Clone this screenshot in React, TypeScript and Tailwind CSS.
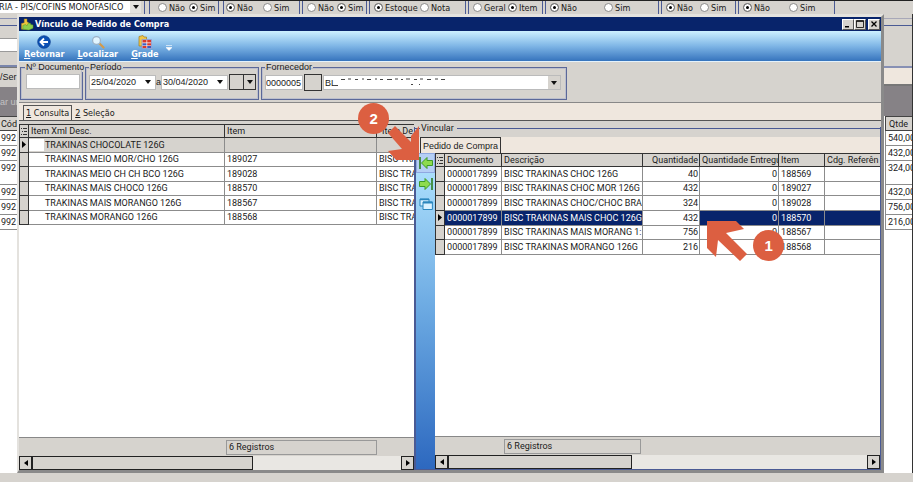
import { useState } from "react"
import clsx from "clsx"

const radioGroups = [
  { id: "g1", width: "w-[70px]", first: "w-[31px]", options: ["Não", "Sim"], value: "Sim", gap: "mr-[4px]", pad: "pl-[8px]" },
  { id: "g2", width: "w-[77px]", first: "w-[37px]", options: ["Não", "Sim"], value: "Não", gap: "mr-[2px]", pad: "pl-[2px]" },
  { id: "g3", width: "w-[65px]", first: "w-[30px]", options: ["Não", "Sim"], value: "Sim", gap: "mr-[2px]", pad: "pl-[4px]" },
  { id: "g4", width: "w-[97px]", first: "w-[46px]", options: ["Estoque", "Nota"], value: "Estoque", gap: "mr-[2px]", pad: "pl-[4px]" },
  { id: "g5", width: "w-[75px]", first: "w-[35px]", options: ["Geral", "Item"], value: "Item", gap: "mr-[2px]", pad: "pl-[4px]" },
  { id: "g6", width: "w-[114px]", first: "w-[54px]", options: ["Não", "Sim"], value: "Não", gap: "mr-[2px]", pad: "pl-[4px]" },
  { id: "g7", width: "w-[75px]", first: "w-[34px]", options: ["Não", "Sim"], value: "Não", gap: "mr-[2px]", pad: "pl-[4px]" },
  { id: "g8", width: "w-[97px]", first: "w-[46px]", options: ["Não", "Sim"], value: "Não", gap: "", pad: "pl-[4px]" },
]

const xmlItems = [
  { desc: "TRAKINAS CHOCOLATE 126G", item: "", itemDesc: "" },
  { desc: "TRAKINAS MEIO MOR/CHO 126G", item: "189027", itemDesc: "BISC TRA" },
  { desc: "TRAKINAS MEIO CH CH BCO 126G", item: "189028", itemDesc: "BISC TRA" },
  { desc: "TRAKINAS MAIS CHOCO 126G", item: "188570", itemDesc: "BISC TRA" },
  { desc: "TRAKINAS MAIS MORANGO 126G", item: "188567", itemDesc: "BISC TRA" },
  { desc: "TRAKINAS MORANGO 126G", item: "188568", itemDesc: "BISC TRA" },
]

const orderItems = [
  { doc: "0000017899", desc: "BISC TRAKINAS CHOC 126G", qty: 40, delivered: 0, item: "188569" },
  { doc: "0000017899", desc: "BISC TRAKINAS CHOC MOR 126G", qty: 432, delivered: 0, item: "189027" },
  { doc: "0000017899", desc: "BISC TRAKINAS CHOC/CHOC BRA", qty: 324, delivered: 0, item: "189028" },
  { doc: "0000017899", desc: "BISC TRAKINAS MAIS CHOC 126G", qty: 432, delivered: 0, item: "188570" },
  { doc: "0000017899", desc: "BISC TRAKINAS MAIS MORANG 1:", qty: 756, delivered: 0, item: "188567" },
  { doc: "0000017899", desc: "BISC TRAKINAS MORANGO 126G", qty: 216, delivered: 0, item: "188568" },
]

const quantities = ["540,00", "432,00", "324,00", "432,00", "756,00", "216,00"]

const gridFont = "font-['Roboto','Liberation_Sans',sans-serif]"
const th = "overflow-hidden whitespace-nowrap border-r border-b border-[#333] p-0 pl-[2px] text-left font-normal"
const cell = "overflow-hidden whitespace-nowrap border-r border-b border-[#8c8c8c]"
const td = cell + " p-0 pl-[2px]"
const marker = "border border-t-0 border-[#333] bg-[#d6d3ce] p-0"

function Caret() {
  return (
    <svg viewBox="0 0 6 4" className="h-[4px] w-[6px]">
      <path d="M0 0h6L3 4z" fill="#111" />
    </svg>
  )
}

function RowPointer() {
  return (
    <svg viewBox="0 0 4 7" className="mx-auto h-[7px] w-[4px]">
      <path d="M0 0l4 3.5L0 7z" fill="#000" />
    </svg>
  )
}

function ListGlyph() {
  return (
    <svg viewBox="0 0 6 7" className="mx-auto h-[7px] w-[6px]" stroke="#333" strokeWidth="1">
      <path d="M0 .5h1M2 .5h4M1 3.5h1M3 3.5h3M0 6.5h1M2 6.5h4" />
    </svg>
  )
}

function RadioGroup({ group }: { group: (typeof radioGroups)[number] }) {
  const [value, setValue] = useState(group.value)
  return (
    <div className={clsx("flex h-[13px] flex-none items-center border-x border-[#4a5a94]", group.width, group.gap, group.pad)}>
      {group.options.map((option, index) => (
        <label key={option} className={clsx("flex flex-none items-center gap-[2px] whitespace-nowrap", index === 0 && group.first)}>
          <input
            type="radio"
            name={group.id}
            checked={value === option}
            onChange={() => setValue(option)}
            className="size-[9px] flex-none appearance-none rounded-full border border-[#8a8a8a] bg-white checked:bg-black checked:shadow-[inset_0_0_0_2px_#fff]"
          />
          {option}
        </label>
      ))}
    </div>
  )
}

function ScrollBar({ thumb }: { thumb: string }) {
  return (
    <div className="flex h-[14px] bg-[#e9e7e3]">
      <button aria-label="Rolar para a esquerda" className="flex w-[13px] flex-none items-center justify-center border border-[#222] bg-[#d6d3ce]">
        <svg viewBox="0 0 4 6" className="h-[6px] w-[4px]"><path d="M4 0v6L0 3z" /></svg>
      </button>
      <div className="flex-1">
        <div className={clsx("h-full border border-[#222] bg-[#d6d3ce]", thumb)} />
      </div>
      <button aria-label="Rolar para a direita" className="flex w-[13px] flex-none items-center justify-center border border-[#222] bg-[#d6d3ce]">
        <svg viewBox="0 0 4 6" className="h-[6px] w-[4px]"><path d="M0 0v6l4-3z" /></svg>
      </button>
    </div>
  )
}

// Part of the entry form that stays visible on the left of the window
function LeftBackground() {
  return (
    <div className="flex w-[17px] flex-none flex-col overflow-hidden whitespace-nowrap bg-white">
      <div className="h-[5px] border-b border-[#8790b4] bg-[#d6d3ce]" />
      <div className="h-[7px] border-b border-[#4a5a94] bg-[#d6d3ce]" />
      <div className="h-[12px] bg-[#d6d3ce]" />
      <div className="h-[14px] border-y border-[#9a9a9a] bg-white" />
      <div className="h-[15px] border-b-2 border-[#7a86ac] bg-[#d6d3ce]" />
      <div className="h-[20px] border-t border-[#777] bg-[#d6d3ce] pt-[3px] font-['Liberation_Sans',sans-serif]">/Ser</div>
      <div className="flex h-[29px] items-center bg-[#868286] font-['Liberation_Sans',sans-serif] text-[#c4c2c4]">ar un</div>
      <div className={clsx("h-[15px] border-t border-b border-[#444] bg-[#d6d3ce] pl-[1px] leading-[14px]", gridFont)}>Cód</div>
      {quantities.map((quantity, index) => (
        <div
          key={index}
          className={clsx("border-b border-[#8c8c8c] pl-[1px] leading-[14px]", gridFont, index === 2 ? "h-[24px]" : "h-[15px]")}
        >
          992
        </div>
      ))}
    </div>
  )
}

function RightBackground() {
  return (
    <div className={clsx("flex w-[29px] flex-none flex-col overflow-hidden whitespace-nowrap border-r border-[#333] bg-white", gridFont)}>
      <div className="h-[5px] border-b border-[#a8a8b8] bg-[#d6d3ce]" />
      <div className="h-[7px] border-b border-[#4a5a94] bg-[#d6d3ce]" />
      <div className="h-[42px] border-b-2 border-[#8790b4] bg-[#d6d3ce]" />
      <div className="h-[18px] border-b-2 border-[#777] bg-[#efe7de]" />
      <div className="h-[30px] bg-[#868286]" />
      <div className="ml-[1px] h-[15px] border-t border-b border-l border-[#444] bg-[#d6d3ce] pl-[3px] leading-[14px]">Qtde</div>
      {quantities.map((quantity, index) => (
        <div
          key={index}
          className={clsx("ml-[1px] border-b border-l border-[#8c8c8c] pl-[2px] leading-[14px]", index === 2 ? "h-[24px]" : "h-[15px]")}
        >
          {quantity}
        </div>
      ))}
    </div>
  )
}

function TitleBar() {
  const control = "flex h-[11px] w-[12px] items-center justify-center border border-[#fff] border-r-[#555] border-b-[#555] bg-[#d6d3ce]"
  return (
    <header className="flex h-[14px] items-center bg-[#08246b] pr-[1px] pl-[1px] text-white">
      <svg viewBox="0 0 14 14" className="h-[13px] w-[14px]">
        <path d="M4 1h3v3l3 2v6H1V6l3-1z" fill="#f0c63e" stroke="#a4801c" strokeWidth=".5" />
        <path d="M2.500 8l3-1 1.500 1.500 1-2.500 2.500-.5L11 7l2.500.5v3.500L9 13l-6.500-1z" fill="#8ccf4d" stroke="#4f9325" strokeWidth=".5" />
      </svg>
      <h1 className="ml-[1px] flex-1 text-[9px] font-bold">Vínculo de Pedido de Compra</h1>
      <button aria-label="Minimizar" className={control}>
        <svg viewBox="0 0 8 8" className="size-[8px]"><path d="M1 6h4v1.500H1z" /></svg>
      </button>
      <button aria-label="Maximizar" className={control}>
        <svg viewBox="0 0 8 8" className="size-[8px]"><path d="M.5.5h7v7h-7zM.5 1.500h7" fill="none" stroke="#000" strokeWidth=".8" /></svg>
      </button>
      <button aria-label="Fechar" className={clsx(control, "ml-[2px]")}>
        <svg viewBox="0 0 8 8" className="size-[8px]"><path d="M1.500 1.500l5 5M6.500 1.500l-5 5" stroke="#000" strokeWidth="1.300" /></svg>
      </button>
    </header>
  )
}

function Toolbar() {
  const button = "flex flex-col items-center text-[9px] leading-[10px] font-bold text-white"
  return (
    <nav className="flex h-[31px] items-start gap-[13px] border-b border-[#e4f2fc] bg-linear-to-b from-[#cdf1ff] via-[#7fb6e6] to-[#3674bd] pt-[4px] pl-[5px]">
      <button className={button}>
        <svg viewBox="0 0 14 14" className="size-[14px]">
          <circle cx="7" cy="7" r="6.300" fill="#0b50b4" stroke="#083a8c" strokeWidth=".7" />
          <path d="M11 7H4M7 3.500L3.500 7 7 10.500" fill="none" stroke="#fff" strokeWidth="1.900" />
        </svg>
        <span><u>R</u>etornar</span>
      </button>
      <button className={button}>
        <svg viewBox="0 0 14 14" className="size-[14px]">
          <path d="M8.500 8.500l4 4" stroke="#d39a4a" strokeWidth="2.200" strokeLinecap="round" />
          <circle cx="5.500" cy="5.500" r="3.900" fill="#e2f5ff" stroke="#9ab0c6" strokeWidth="1.200" />
        </svg>
        <span><u>L</u>ocalizar</span>
      </button>
      <button className={button}>
        <svg viewBox="0 0 14 14" className="size-[14px]">
          <path d="M1 1.500L5 .5l1 1.500h2.500v9H1z" fill="#efc64a" stroke="#a47d1d" strokeWidth=".7" />
          <path d="M4 4.500h9.500v9H4z" fill="#fff" stroke="#8a93c8" strokeWidth=".8" />
          <path d="M4.500 5h4v2.500h-4zM9.200 5H13v2.500H9.200z" fill="#d6382c" />
          <path d="M4.500 8.200h4v2.200h-4zM9.200 11H13v2H9.200z" fill="#3e5cc0" />
          <path d="M9.200 8.200H13v2.200H9.200zM4.500 11h4v2h-4z" fill="#d6382c" />
        </svg>
        <span><u>G</u>rade</span>
      </button>
      <svg viewBox="0 0 6 6" className="mt-[10px] -ml-[6px] h-[6px] w-[6px]">
        <path d="M0 .5h6M0 2.500h6L3 5.500z" fill="#fff" stroke="#fff" strokeWidth=".6" />
      </svg>
    </nav>
  )
}

function DateField({ label, value }: { label: string; value: string }) {
  const [date, setDate] = useState(value)
  return (
    <div className="flex h-[15px] w-[67px] items-center border border-[#bbb] bg-white">
      <input
        aria-label={label}
        value={date}
        onChange={(e) => setDate(e.target.value)}
        className="w-[51px] bg-transparent pl-[1px] outline-none"
      />
      <button aria-label="Abrir calendário" className="ml-[4px]"><Caret /></button>
    </div>
  )
}

function Filters() {
  const fieldset = "h-[38px] min-w-0 border border-[#5b6899] shadow-[inset_0_0_0_1px_#bcbfcc]"
  const legend = "h-[10px] px-[1px] leading-[10px] whitespace-nowrap"
  return (
    <form className="flex h-[41px] gap-[2px] border-b border-[#888] bg-[#d6d3ce] pl-[1px] font-['Liberation_Sans',sans-serif]">
      <fieldset className={clsx(fieldset, "w-[63px] pl-[4px]")}>
        <legend className={legend}><label htmlFor="documento">Nº Documento</label></legend>
        <input id="documento" className="mt-[2px] ml-[1px] block h-[15px] w-[54px] border border-[#bbb] bg-white outline-none" />
      </fieldset>
      <fieldset className={clsx(fieldset, "w-[174px] pl-[3px]")}>
        <legend className={legend}>Período</legend>
        <div className="mt-[2px] flex items-center">
          <DateField label="Data inicial" value="25/04/2020" />
          <span className="w-[5px] flex-none text-center">a</span>
          <DateField label="Data final" value="30/04/2020" />
          <button aria-label="Período rápido" className="ml-[1px] flex h-[16px] w-[27px] border border-[#333]">
            <span className="h-full w-[14px] border-r border-[#333]" />
            <span className="flex h-full flex-1 items-center justify-center"><Caret /></span>
          </button>
        </div>
      </fieldset>
      <fieldset className={clsx(fieldset, "w-[306px] pr-[5px] pl-[3px]")}>
        <legend className={legend}><label htmlFor="fornecedor">Fornecedor</label></legend>
        <div className="mt-[2px] flex items-center">
          <input id="fornecedor" defaultValue="0000005" className="h-[15px] w-[38px] flex-none border border-[#bbb] bg-white outline-none" />
          <button aria-label="Pesquisar fornecedor" className="mx-[1px] h-[17px] w-[18px] flex-none border border-[#333]" />
          <div className="relative flex-1">
            <select aria-label="Nome do fornecedor" className="block h-[15px] w-full appearance-none border border-[#bbb] bg-white pl-[1px] outline-none">
              <option>BL</option>
            </select>
            {/* remains of the erased supplier name */}
            <svg viewBox="0 0 114 8" className="pointer-events-none absolute top-[3px] left-[12px] h-[8px] w-[114px]" stroke="#444" strokeWidth="1">
              <path d="M0 7.500h3M6 1.500h4M13 1h3M20 1.500h3M27 1h2M32 1.500h4M40 1h2M45 1.500h3M52 1.500h5M60 1h3M66 1.500h2M71 1h4M79 1.500h3M85 1h3M92 1.500h4M100 1h3M106 1.500h4M76 6.500h2M84 6.500h1" />
            </svg>
            <span className="pointer-events-none absolute top-[1px] right-[1px] flex h-[13px] w-[12px] items-center justify-center bg-[#d6d3ce]">
              <Caret />
            </span>
          </div>
        </div>
      </fieldset>
    </form>
  )
}

function XmlItemsGrid() {
  return (
    <section className={clsx("flex w-11/24 flex-none flex-col overflow-hidden bg-[#d6d3ce] pt-[3px]", gridFont)}>
      <div className="flex-1 overflow-hidden bg-white">
        <table className="h-[101px] w-[460px] table-fixed border-separate border-spacing-0 border-t border-[#333]">
          <colgroup>
            <col className="w-[10px]" />
            <col className="w-[196px]" />
            <col className="w-[152px]" />
            <col className="w-[102px]" />
          </colgroup>
          <thead className="bg-[#d6d3ce]">
            <tr>
              <th className={marker}><ListGlyph /></th>
              <th className={th}>Item Xml Desc.</th>
              <th className={th}>Item</th>
              <th className={th}><span className="pl-[3px]">Item De</span></th>
            </tr>
          </thead>
          <tbody>
            {xmlItems.map((row, index) => (
              <tr key={row.desc} className={clsx(index === 0 && "bg-[#d6d3ce]")}>
                <td className={marker}>{index === 0 && <RowPointer />}</td>
                <td className={clsx(cell, "p-0")}>
                  <div className="flex">
                    <span className="w-[15px] flex-none bg-white" />
                    <span className="pl-[1px]">{row.desc}</span>
                  </div>
                </td>
                <td className={td}>{row.item}</td>
                <td className={td}>{row.itemDesc}</td>
              </tr>
            ))}
          </tbody>
        </table>
      </div>
      <footer className="flex h-[19px] items-center border-t border-[#888] pl-[207px]">
        <span className="flex h-[15px] w-[151px] items-center border border-[#999] pl-[2px]">6 Registros</span>
      </footer>
      <ScrollBar thumb="w-[60%]" />
    </section>
  )
}

function OrderGrid() {
  const [selected, setSelected] = useState(3)
  return (
    <div className="flex min-w-0 flex-1 flex-col bg-[#d6d3ce]">
      <div className="flex-1 overflow-hidden bg-white">
        <table className="h-[102px] w-[448px] table-fixed border-separate border-spacing-0 border-t border-[#333]">
          <colgroup>
            <col className="w-[10px]" />
            <col className="w-[57px]" />
            <col className="w-[141px]" />
            <col className="w-[57px]" />
            <col className="w-[79px]" />
            <col className="w-[46px]" />
            <col className="w-[58px]" />
          </colgroup>
          <thead className="bg-[#d6d3ce]">
            <tr>
              <th className={marker}><ListGlyph /></th>
              <th className={th}>Documento</th>
              <th className={th}>Descrição</th>
              <th className={clsx(th, "pr-[1px] text-right")}>Quantidade</th>
              <th className={th}>Quantidade Entregu</th>
              <th className={th}>Item</th>
              <th className={th}>Cdg. Referên</th>
            </tr>
          </thead>
          <tbody>
            {orderItems.map((row, index) => (
              <tr key={row.item} onClick={() => setSelected(index)} className={clsx(selected === index && "bg-[#08246b] text-white")}>
                <td className={clsx(marker, "text-black")}>{selected === index && <RowPointer />}</td>
                <td className={td}>{row.doc}</td>
                <td className={td}>{row.desc}</td>
                <td className={clsx(td, "bg-white pr-[1px] text-right text-[#1a1a1a]")}>{row.qty}</td>
                <td className={clsx(td, "pr-[1px] text-right")}>{row.delivered}</td>
                <td className={td}>{row.item}</td>
                <td className={td} />
              </tr>
            ))}
          </tbody>
        </table>
      </div>
      <footer className="flex h-[19px] items-center border-t border-[#888] pl-[69px]">
        <span className="flex h-[15px] w-[137px] items-center border border-[#999] pl-[2px]">6 Registros</span>
      </footer>
      <ScrollBar thumb="w-[44%]" />
    </div>
  )
}

function SideTools() {
  return (
    <div className="flex w-[20px] flex-none flex-col items-center border-l border-[#4a5a94] bg-linear-to-b from-[#b4e6ff] via-[#6ba9e2] to-[#2d68bf]">
      <button aria-label="Vincular item" className="flex h-[20px] w-full items-center justify-center border border-[#8fa8e0] bg-[#b5cff5]">
        <svg viewBox="0 0 14 14" className="size-[14px]">
          <path d="M1 1v12" stroke="#2c7d1e" strokeWidth="1.600" />
          <path d="M2.500 7L8 1.500v3h5.500v5H8v3z" fill="#8edb4e" stroke="#3d9a28" strokeWidth="1" />
        </svg>
      </button>
      <button aria-label="Desvincular item" className="flex h-[21px] w-full items-center justify-center">
        <svg viewBox="0 0 14 14" className="size-[14px]">
          <path d="M13 1v12" stroke="#2c7d1e" strokeWidth="1.600" />
          <path d="M11.500 7L6 1.500v3H.5v5H6v3z" fill="#8edb4e" stroke="#3d9a28" strokeWidth="1" />
        </svg>
      </button>
      <button aria-label="Janelas" className="flex h-[20px] w-full items-center justify-center">
        <svg viewBox="0 0 14 14" className="size-[14px]" fill="#d9f1ff" stroke="#2b86bd">
          <path d="M1 2h9v7H1z" />
          <path d="M1 2.500h9" strokeWidth="1.500" />
          <path d="M4 5h9.400v7.500H4z" />
          <path d="M4 5.500h9.400" strokeWidth="2" />
        </svg>
      </button>
    </div>
  )
}

function Callouts() {
  const badge = "absolute z-10 flex size-[31px] items-center justify-center rounded-full bg-[#dc5f41] font-['Liberation_Sans',sans-serif] text-[15px] font-bold text-white"
  return (
    <>
      <svg viewBox="0 0 34 35" className="absolute top-[-1px] left-[-29px] z-10 h-[35px] w-[34px]">
        <path d="M9 0l16 16v-6l8-10v34H10l-8-9 14-2L2 7z" fill="#dc5f41" />
      </svg>
      <span className={clsx(badge, "top-[-24px] left-[-57px]")}>2</span>
      <svg viewBox="0 0 42 42" className="absolute top-[94px] left-[292px] z-10 size-[42px]">
        <path d="M0 0h29l8 8-18 4 21 21-7 7-22-21-2 17-9-9z" fill="#dc5f41" />
      </svg>
      <span className={clsx(badge, "top-[103px] left-[338px]")}>1</span>
    </>
  )
}

export default function App() {
  return (
    <div className="flex min-h-screen flex-col overflow-hidden bg-[#d6d3ce] font-['DejaVu_Sans_Condensed','DejaVu_Sans',sans-serif] text-[9px] leading-[12px] text-[#1a1a1a]">
      <div className="flex h-[14px] flex-none overflow-hidden border-t border-[#222]">
        <div className="relative mr-[3px] w-[141px] flex-none">
          <select aria-label="Tributação" className="h-[12px] w-full appearance-none bg-white indent-[-1px] outline-none">
            <option>RIA - PIS/COFINS MONOFASICO</option>
          </select>
          <span className="pointer-events-none absolute top-[0px] right-[0px] flex h-[12px] w-[11px] items-center justify-center bg-[#e4e2de]">
            <Caret />
          </span>
        </div>
        <div className="mr-[4px] h-[13px] w-[1px] flex-none bg-[#4a5a94]" />
        {radioGroups.map((group) => (
          <RadioGroup key={group.id} group={group} />
        ))}
      </div>

      <div className="flex flex-1">
        <LeftBackground />
        <main className="flex min-w-0 flex-1 flex-col border-t-[3px] border-r-[3px] border-b-[3px] border-l-2 border-t-[#e4e2de] border-r-[#8a8a8a] border-b-[#8a8a8a] border-l-[#e4e2de] bg-[#d6d3ce]">
          <TitleBar />
          <Toolbar />
          <Filters />
          <div className="flex h-[18px] flex-none items-end border-b border-[#555] bg-[#efe7de] pl-[4px]" role="tablist">
            <button role="tab" aria-selected="true" className="h-[15px] border border-b-0 border-[#555] px-[2px]"><u>1</u> Consulta</button>
            <button role="tab" aria-selected="false" className="h-[15px] px-[3px]"><u>2</u> Seleção</button>
          </div>
          <div className="flex flex-1">
            <XmlItemsGrid />
            <section className="relative mt-[6px] flex min-w-0 flex-1 flex-col border border-t-0 border-[#4a5a94]">
              <Callouts />
              <div className={clsx("flex h-[2px] items-center", gridFont)}>
                <span className="h-[1px] w-[5px] bg-[#4a5a94]" />
                <h2 className="px-[1px]">Vincular</h2>
                <span className="ml-[2px] h-[1px] flex-1 bg-[#4a5a94]" />
              </div>
              <div className="mt-[8px] flex h-[16px] bg-[#efe7de] pl-[5px]" role="tablist">
                <button role="tab" aria-selected="true" className="border border-b-0 border-[#333] bg-[#efe7de] px-[2px] font-['Liberation_Sans',sans-serif]">Pedido de Compra</button>
              </div>
              <div className={clsx("flex flex-1", gridFont)}>
                <SideTools />
                <OrderGrid />
              </div>
            </section>
          </div>
        </main>
        <RightBackground />
      </div>

      <div className="h-[9px] flex-none bg-[#d6d3ce]" />
    </div>
  )
}
